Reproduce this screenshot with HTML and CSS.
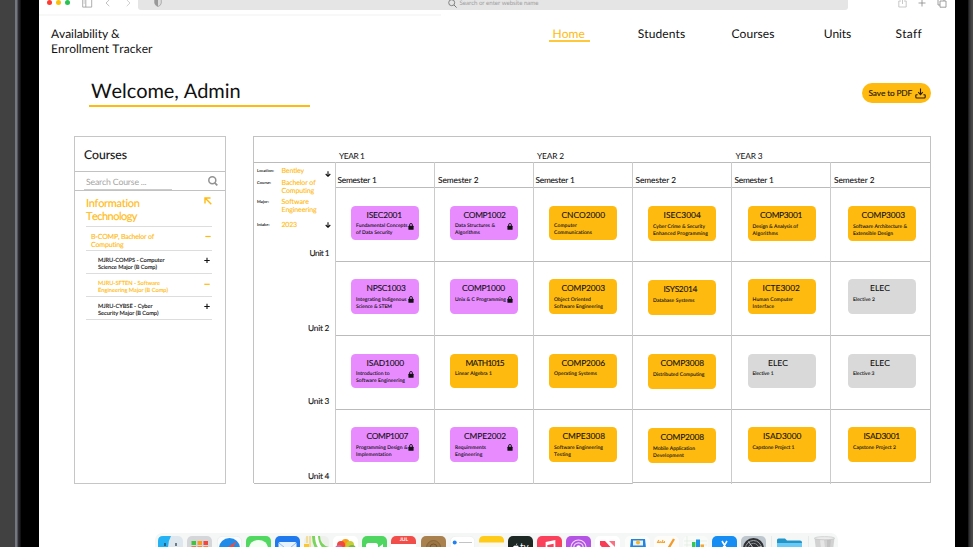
FILE: index.html
```html
<!DOCTYPE html>
<html lang="en">
<head>
<meta charset="utf-8">
<title>Availability &amp; Enrollment Tracker</title>
<link rel="stylesheet" href="styles.css">
</head>
<body>
<div class="bezel-left"></div>
<div class="screen">
  <div class="toolbar">
    <i class="dot red"></i><i class="dot yellow"></i><i class="dot green"></i>
    <svg class="ic-side" width="11" height="10" viewBox="0 0 11 10"><path d="M.7.7h9v8.400h-9zM3.800.7v8.400M1.700 3h1M1.700 5h1" fill="none" stroke="#999" stroke-width=".8"/></svg>
    <svg class="ic-back" width="5" height="8" viewBox="0 0 5 8"><path d="M4.300.8 1 4l3.300 3.200" fill="none" stroke="#bbb" stroke-width=".9"/></svg>
    <svg class="ic-next" width="5" height="8" viewBox="0 0 5 8"><path d="M.7.8 4 4 .7 7.200" fill="none" stroke="#ccc" stroke-width=".9"/></svg>
    <div class="address">
      <svg class="ic-shield" width="8" height="9" viewBox="0 0 8 9"><path d="M4 .5 7.300 1.400V5Q7 7.500 4 8.600 1 7.500.7 5V1.400z" fill="#ddd" stroke="#999" stroke-width=".7"/><path d="M4 .5V8.600Q1 7.500.7 5V1.400z" fill="#999"/></svg>
      <svg class="ic-find" width="9" height="9" viewBox="0 0 9 9"><circle cx="3.700" cy="3.700" r="3" fill="none" stroke="#777" stroke-width=".9"/><path d="m6 6 2.600 2.600" stroke="#777"/></svg>
      <span data-w="79">Search or enter website name</span>
    </div>
    <svg class="ic-share" width="9" height="11" viewBox="0 0 9 11"><path d="M3 4H.8v6h7.400V4H6M4.500 7V.8M2.700 2.400 4.500.7l1.800 1.700" fill="none" stroke="#bbb" stroke-width=".8"/></svg>
    <svg class="ic-plus" width="8" height="8" viewBox="0 0 8 8"><path d="M4 .5v7M.5 4h7" stroke="#888" stroke-width=".8"/></svg>
    <svg class="ic-tabs" width="10" height="10" viewBox="0 0 10 10"><path d="M3 3h6v6.200H3zM3 7H1V.8h6V3" fill="none" stroke="#888" stroke-width=".8"/></svg>
  </div>
  <div class="toolbar-line"></div>

  <header class="header">
    <div class="brand"><span data-w="68.500">Availability &amp;</span><span data-w="101.500">Enrollment Tracker</span></div>
    <nav class="nav">
      <a class="active"><span data-w="32.500">Home</span></a>
      <a class="students"><span data-w="47.500">Students</span></a>
      <a class="courses"><span data-w="43">Courses</span></a>
      <a class="units"><span data-w="27.500">Units</span></a>
      <a class="staff"><span data-w="26.500">Staff</span></a>
    </nav>
  </header>

  <div class="welcome">
    <h1><span data-w="149.500">Welcome, Admin</span></h1>
    <button class="save"><span data-w="43.500">Save to PDF</span>
      <svg width="11" height="11" viewBox="0 0 11 11"><path d="M5.500.6v5.600M3.200 4.200l2.300 2.400 2.300-2.400M2.600 6.800H1.500Q.8 6.800.8 7.500V9q0 1 1 1h7.400q1 0 1-1V7.500q0-.7-.7-.7H8.400" fill="none" stroke="#2a1d00" stroke-width="1.100"/></svg>
    </button>
  </div>

  <main class="main">
    <aside class="sidebar">
      <h2><span data-w="43">Courses</span></h2>
      <div class="search">
        <div class="field"><span data-w="60.500">Search Course ...</span></div>
        <svg width="10" height="10" viewBox="0 0 10 10"><circle cx="4.300" cy="4.300" r="3.500" fill="none" stroke="#929292" stroke-width="1.500"/><path d="m6.800 6.800 2.500 2.500" stroke="#929292" stroke-width="1.700"/></svg>
      </div>
      <div class="tree">
        <div class="node faculty"><div class="label"><span data-w="53.500">Information</span><span data-w="51">Technology</span></div>
          <svg width="8" height="8" viewBox="0 0 8 8"><path d="M7.300 7.300 1.300 1.300M1 6.500V1h5.500" fill="none" stroke="#ffba10" stroke-width="1.400"/></svg></div>
        <div class="node degree"><div class="label"><span data-w="63">B-COMP, Bachelor of</span><span data-w="32.500">Computing</span></div>
          <svg width="6" height="6" viewBox="0 0 6 6"><path d="M.3 2.500h5.400" stroke="#ffba10" stroke-width="1.200"/></svg></div>
        <div class="node major"><div class="label"><span data-w="66.500">MJRU-COMPS - Computer</span><span data-w="59">Science Major (B Comp)</span></div>
          <svg width="6" height="6" viewBox="0 0 6 6"><path d="M.3 3.500h5.400M3 .8v5.200" stroke="#111" stroke-width="1.100"/></svg></div>
        <div class="node major open"><div class="label"><span data-w="62">MJRU-SFTEN - Software</span><span data-w="70">Engineering Major (B Comp)</span></div>
          <svg width="6" height="6" viewBox="0 0 6 6"><path d="M.3 4.300h5.400" stroke="#ffba10" stroke-width="1.200"/></svg></div>
        <div class="node major"><div class="label"><span data-w="54.500">MJRU-CYBSE - Cyber</span><span data-w="60.500">Security Major (B Comp)</span></div>
          <svg width="6" height="6" viewBox="0 0 6 6"><path d="M.3 3.500h5.400M3 .8v5.200" stroke="#111" stroke-width="1.100"/></svg></div>
      </div>
    </aside>

    <section class="planner">
      <div class="years"><span data-w="25.500">YEAR 1</span><span data-w="27">YEAR 2</span><span data-w="27">YEAR 3</span></div>
      <div class="plan">
        <div class="filters">
          <div class="filter location"><div class="key"><span data-w="17">Location:</span></div><div class="value"><span data-w="22.500">Bentley</span></div>
            <svg width="6" height="6" viewBox="0 0 6 6"><path d="M3 .2v5M.7 3 3 5.300 5.300 3" fill="none" stroke="#111" stroke-width="1.100"/></svg></div>
          <div class="filter course"><div class="key"><span data-w="14">Course:</span></div><div class="value"><span data-w="34">Bachelor of</span><span data-w="32.500">Computing</span></div></div>
          <div class="filter field-major"><div class="key"><span data-w="12">Major:</span></div><div class="value"><span data-w="27.500">Software</span><span data-w="35">Engineering</span></div></div>
          <div class="filter intake"><div class="key"><span data-w="12.500">Intake:</span></div><div class="value"><span data-w="15.500">2023</span></div>
            <svg width="6" height="6" viewBox="0 0 6 6"><path d="M3 .2v5M.7 3 3 5.300 5.300 3" fill="none" stroke="#111" stroke-width="1.100"/></svg></div>
          <div class="unit u1"><span data-w="19.500">Unit 1</span></div>
          <div class="unit u2"><span data-w="21">Unit 2</span></div>
          <div class="unit u3"><span data-w="21">Unit 3</span></div>
          <div class="unit u4"><span data-w="21">Unit 4</span></div>
        </div>
        <div class="semesters" id="semesters"></div>
      </div>
    </section>
  </main>

  <div class="dock">
    <svg width="25" height="25" viewBox="0 0 25 25"><rect width="25" height="25" rx="5" fill="#dfe7ee"/><path d="M5 0h8q-3 5-3 13h3v12H5q-5 0-5-5V5q0-5 5-5" fill="#25b2f4"/><path d="M7 7v3M18 7v3" stroke="#234" stroke-width="1.200"/></svg>
    <svg width="25" height="25" viewBox="0 0 25 25"><rect width="25" height="25" rx="5" fill="#d5d6d9"/><path fill="#41c33f" d="M4.500 5H9v4H4.500z"/><path fill="#fb9b19" d="M10.500 5H15v4h-4.500z"/><path fill="#f6453c" d="M16.500 5H21v4h-4.500z"/><path fill="#f6593c" d="M4.500 10.300H9v4H4.500z"/><path fill="#fc6c28" d="M10.500 10.300H15v4h-4.500zM16.500 10.300H21v4h-4.500z"/></svg>
    <svg width="25" height="25" viewBox="0 0 25 25"><rect x=".3" y=".3" width="24.400" height="24.400" rx="5" fill="#fafbfc" stroke="#e6e8ea" stroke-width=".6"/><circle cx="12.500" cy="12.500" r="10.500" fill="#218bea"/><path d="m20 5-6 9-3-3z" fill="#f14b3f"/><path d="m11 11 3 3-9 6z" fill="#fff"/></svg>
    <svg width="25" height="25" viewBox="0 0 25 25"><rect width="25" height="25" rx="5" fill="#51d861"/><ellipse cx="12.500" cy="12" rx="9.500" ry="8" fill="#f2fff2"/></svg>
    <svg width="25" height="25" viewBox="0 0 25 25"><rect width="25" height="25" rx="5" fill="#2079ed"/><rect x="3.500" y="6" width="18" height="13" rx="1.500" fill="#e7f2ff"/><path d="m4 7 8.500 7L21 7" fill="none" stroke="#8fb9e8"/></svg>
    <svg width="25" height="25" viewBox="0 0 25 25"><rect width="25" height="25" rx="5" fill="#eef0ec"/><path d="M8 0h8q0 9 9 11v9q-17-3-17-20" fill="#7bd45b"/><path d="M11 0h3q1 13 11 15v3Q11 15 11 0" fill="#fff"/><path d="M0 8h5v8H0" fill="#fbc62e"/><path d="M3 0v7M6 0v12" stroke="#f4c84d"/></svg>
    <svg width="25" height="25" viewBox="0 0 25 25"><rect width="25" height="25" rx="5" fill="#fff"/><circle cx="12.500" cy="7" r="4" fill="#f99c18"/><circle cx="17" cy="9" r="4" fill="#c9cc32"/><circle cx="8" cy="9" r="4" fill="#ef4a3d"/><circle cx="19" cy="13" r="4" fill="#72b94a"/><circle cx="6" cy="13" r="4" fill="#d569a6"/></svg>
    <svg width="25" height="25" viewBox="0 0 25 25"><rect width="25" height="25" rx="5" fill="#4fd660"/><rect x="4" y="7" width="12" height="11" rx="2.500" fill="#fff"/><path d="m17 11 4-3v9l-4-3z" fill="#fff"/></svg>
    <div class="calendar"><b>JUL</b><em>17</em></div>
    <svg width="25" height="25" viewBox="0 0 25 25"><rect width="25" height="25" rx="5" fill="#a8814f"/><circle cx="12.500" cy="11.500" r="7" fill="#9b7546" stroke="#80602f" stroke-width=".8"/><circle cx="12.500" cy="11.500" r="3.500" fill="none" stroke="#76572b"/></svg>
    <svg width="25" height="25" viewBox="0 0 25 25"><rect x=".3" y=".3" width="24.400" height="24.400" rx="5" fill="#fff" stroke="#eaeaea" stroke-width=".6"/><circle cx="4.700" cy="6.500" r="2" fill="#2281f2"/><path d="M9 6.500h13" stroke="#b4b4b8" stroke-width=".8"/></svg>
    <svg width="25" height="25" viewBox="0 0 25 25"><rect width="25" height="25" rx="5" fill="#fbf9ee"/><path d="M0 6.500V5q0-5 5-5h15q5 0 5 5v1.500" fill="#fecb1a"/></svg>
    <div class="tv"><svg width="8" height="8" viewBox="0 0 8 8"><path d="M4 2.300Q4 .8 5.200.3 5.300 1.700 4 2.300M1 4.500q0-2 2-2l1 .3 1-.3q1.500 0 1.800.8-1.600 1.200.2 2.700Q6.200 8 5.200 7.700L4 7.400l-1.200.3Q1 7.500 1 4.500" fill="#fff"/></svg><span>tv</span></div>
    <svg width="25" height="25" viewBox="0 0 25 25"><rect width="25" height="25" rx="5" fill="#fa405b"/><path d="M9.500 17V6.800l8-1.800v11M9.500 8.500l8-1.800" fill="none" stroke="#fff" stroke-width="1.700"/></svg>
    <svg width="25" height="25" viewBox="0 0 25 25"><rect width="25" height="25" rx="5" fill="#b354e4"/><g fill="none" stroke="#f2dcff" stroke-width="1.200"><circle cx="12.500" cy="11.500" r="7.500"/><circle cx="12.500" cy="11.500" r="4.700"/></g><circle cx="12.500" cy="11.500" r="2.200" fill="#fff"/></svg>
    <svg width="25" height="25" viewBox="0 0 25 25"><rect width="25" height="25" rx="5" fill="#fff"/><path d="M5 5h5l10 11v4h-5L5 9z" fill="#fa3c57"/><path d="M14 5h6v6z" fill="#fb7080"/></svg>
    <svg width="25" height="25" viewBox="0 0 25 25"><rect width="25" height="25" rx="5" fill="#fcfcfb"/><path d="M6 3h14l1 9H5z" fill="#2384df"/><path d="M8 4.500h10v5H8z" fill="#e7f2fb"/><circle cx="13" cy="6.500" r="2" fill="#f6b62c"/></svg>
    <svg width="25" height="25" viewBox="0 0 25 25"><rect width="25" height="25" rx="5" fill="#fdfcf8"/><path d="M4.800 4 3.600 6.500h2.600V5M9 4 7.800 6.500h2.600V5" stroke="#f5a633" stroke-width="1.200" fill="none"/><path d="m20 3-9 15" stroke="#f29b2d" stroke-width="2.300"/></svg>
    <svg width="25" height="25" viewBox="0 0 25 25"><rect width="25" height="25" rx="5" fill="#f9fbf8"/><path d="M4 0v25M1 5h23M1 9h23" stroke="#dce9df" stroke-width=".6"/><path d="M9 6h3.500v15H9z" fill="#33c659"/><path d="M13 3.500h4V21h-4z" fill="#1f93e8"/><path d="M17.500 8.500H21V21h-3.500z" fill="#f8a62b"/></svg>
    <svg width="25" height="25" viewBox="0 0 25 25"><rect width="25" height="25" rx="5" fill="#168df2"/><path d="m10 5 7 12M15 5 8 17M5 14h15" stroke="#fff" stroke-width="1.600"/></svg>
    <svg width="25" height="25" viewBox="0 0 25 25"><rect width="25" height="25" rx="5" fill="#bfc7ce"/><circle cx="12.500" cy="12.500" r="10.500" fill="#303236"/><circle cx="12.500" cy="12.500" r="8" fill="none" stroke="#a0a5a9"/><circle cx="12.500" cy="12.500" r="5.200" fill="none" stroke="#878d92"/><path d="m12.500 12.500-5-7M12.500 12.500l8-2" stroke="#c9cdd1"/></svg>
    <i class="rule"></i>
    <svg width="25" height="25" viewBox="0 0 25 25"><path d="M0 4q0-1.500 1.500-1.500H8l2 2h13q2 0 2 2V22H0z" fill="#2396c9"/><path d="M0 7h25v15H0z" fill="#6bcaf5"/></svg>
    <i class="rule"></i>
    <svg width="21" height="25" viewBox="0 0 21 25"><path d="M.5 2h20l-2.500 20H3z" fill="#d2d2d2"/><path d="M6 4h4l1 8H7z" fill="#e6e6e6"/><path d="M13 4h4l-1 8h-3z" fill="#c3c3c3"/><ellipse cx="10.500" cy="2.200" rx="10" ry="1.600" fill="#ececec" stroke="#c1c1c1" stroke-width=".6"/></svg>
  </div>
</div>
<div class="bezel-right"></div>
<script src="planner.js"></script>
</body>
</html>
```

FILE: styles.css
```css
* { box-sizing: border-box; }
body {
  margin: 0; width: 973px; height: 547px; overflow: hidden; display: flex;
  background: #000; color: #111; font-family: Lato, "Open Sans", sans-serif;
  text-rendering: geometricPrecision;
}
svg { display: block; flex: none; }
h1, h2 { margin: 0; font-weight: 400; }
[data-w] { display: block; width: max-content; white-space: pre; font-kerning: none; font-variant-ligatures: none; }

.bezel-left { width: 39px; flex: none; background: linear-gradient(90deg, #414141 14.500px, #74777f 15.500px 17px, #303136 18px, #1c1c1e 20px, #000 21.500px); }
.bezel-right { width: 18px; flex: none; background: linear-gradient(90deg, #000 12.500px, #2c2c2e 14px, #4a4a4d 17px); }
.screen { width: 916px; height: 547px; flex: none; background: #fff; display: flex; flex-direction: column; overflow: hidden; }

.toolbar { height: 14px; flex: none; display: flex; align-items: center; padding: 0 8px 9px; overflow: hidden; }
.toolbar > * { flex: none; }
.dot { width: 5px; height: 5px; border-radius: 50%; margin-right: 4px; }
.red { background: #ff3b30; }
.yellow { background: #fbc108; }
.green { background: #28c250; }
.ic-side { margin-left: 8px; }
.ic-back { margin-left: 11.500px; }
.ic-next { margin-left: 16px; }
.address { width: 710px; height: 15px; margin-left: 7px; border-radius: 0 0 3px 3px; background: #e5e5e5; display: flex; align-items: center; color: #a0a0a0; font-size: 6.200px; }
.address span { padding-top: 1px; }
.ic-shield { margin-left: 16.500px; }
.ic-find { margin: 1px 2.500px 0 286px; }
.ic-share { margin-left: 50px; }
.ic-plus { margin-left: 11.500px; }
.ic-tabs { margin-left: 11px; }
.toolbar-line { width: 402px; height: 2px; flex: none; background: #f8f8f8; }

.header { height: 57px; flex: none; display: flex; padding: 9.800px 0 0 12px; font-size: 12px; line-height: 15.300px; }
.brand { width: 498px; }
.nav { display: flex; }
.nav a { height: 16.200px; }
.nav .active { width: 40.500px; padding-left: 3.500px; color: #ffba10; border-bottom: 2px solid #ffc83c; }
.students { margin-left: 48.200px; }
.courses { margin-left: 46.300px; }
.units { margin-left: 49.200px; }
.staff { margin-left: 44.300px; }

.welcome { height: 63px; flex: none; display: flex; justify-content: space-between; padding: 5px 24px 0 49.500px; }
.welcome h1 { width: 221.500px; height: 29px; padding: .5px 0 0 2.500px; font-size: 20px; line-height: 24px; border-bottom: 2px solid #ffba10; }
.save { width: 69px; height: 20px; margin-top: 5px; padding: 0 0 0 6.500px; border: 0; border-radius: 10px; background: #ffba10; display: flex; align-items: center; gap: 2.700px; font: 8.300px/10px Lato, sans-serif; color: #1d1400; -webkit-text-stroke: .12px; }

.main { flex: none; height: 349px; display: flex; gap: 27px; padding-left: 35px; }
.sidebar { width: 152px; height: 348px; border: 1px solid #c6c6c6; }
.sidebar h2 { height: 35px; padding: 10.300px 0 0 9px; font-size: 12.200px; line-height: 16px; border-bottom: 1px solid #c2c2c2; -webkit-text-stroke: .12px; }
.search { height: 19px; display: flex; justify-content: space-between; padding: 0 7.500px 0 9px; border-bottom: 1px solid #c2c2c2; align-items: center; }
.field { width: 88px; height: 17px; padding: 3.200px 0 0 2px; border-bottom: 1px solid #ccc; font-size: 8.700px; line-height: 11px; color: #a5a5a5; }
.tree { padding: 0 13px 0 11px; }
.node { display: flex; justify-content: space-between; border-bottom: 1px solid #ddd; -webkit-text-stroke: .12px; }
.faculty { height: 36px; padding-top: 6.400px; font-size: 11px; line-height: 13px; color: #ffba10; }
.degree { height: 24px; padding: 7.300px 1.500px 0 5px; font-size: 7px; line-height: 7.800px; color: #ffba10; }
.major { height: 23px; padding: 6.300px 2px 0 12px; font-size: 5.700px; line-height: 7px; }
.open { color: #ffba10; }

.planner { width: 678px; border: 1px solid #c2c2c2; border-bottom: 0; height: 347px; }
.years { height: 25px; padding: 13.700px 0 0 85px; display: flex; font-size: 8.400px; line-height: 11px; }
.years span + span { margin-left: 172.500px; }
.years span:last-child { margin-left: 171.500px; }
.plan { display: flex; }
.filters { width: 81px; height: 322px; flex: none; border-top: 1px solid #bbb; border-bottom: 1px solid #bbb; padding-left: 3px; font-size: 7px; line-height: 8px; -webkit-text-stroke: .1px; }
.filter { display: flex; }
.key { width: 24.500px; font-size: 4px; line-height: 7.800px; }
.value { width: 43.500px; color: #ffba10; }
.location { height: 12.300px; padding-top: 3.600px; }
.location svg { margin-top: 4.200px; }
.course { height: 19px; padding-top: 3.600px; }
.field-major { height: 19px; padding-top: 3.800px; }
.intake { height: 16px; padding-top: 7.700px; }
.intake svg { margin-top: .7px; }
.unit { display: flex; justify-content: flex-end; padding-right: 6px; height: 10px; font-size: 8.300px; line-height: 10px; }
.u1 { margin-top: 19.200px; }
.u2 { margin-top: 64.500px; }
.u3 { margin-top: 63px; }
.u4 { margin-top: 65px; }

.semesters { display: flex; }
.semester { width: 99px; border-left: 1px solid #cbcbcb; }
.semester:last-child { width: 100px; }
.semester h3 { margin: 0; height: 25px; border-top: 1px solid #bbb; padding: 11.700px 0 0 var(--x); font-weight: 400; font-size: 8.300px; line-height: 10px; -webkit-text-stroke: .1px; }
.cell { height: 74px; border-top: 1px solid #bbb; padding: var(--y) 0 0 var(--x); }
.cell:last-child { height: 75px; border-bottom: 1px solid #bbb; }
.short .cell:last-child { height: 74px; }
.card { width: 68px; height: 34.500px; border-radius: 4.500px; padding-top: 4px; background: #ffba10; font-size: 5px; line-height: 6.700px; -webkit-text-stroke: .1px; }
.card.locked { background: #e78bff; }
.card.elective { background: #d9d9d9; }
.card h4 { margin: 0; height: 11.500px; padding-left: var(--t); font-weight: 400; font-size: 8.400px; line-height: 11px; }
.about { display: flex; justify-content: space-between; padding: 2.300px 4.600px 0 5px; }
.about svg { margin-top: -.8px; }

.dock { width: 683px; height: 14px; margin: auto 0 0 116px; flex: none; display: flex; gap: 4.150px; padding: 3px 0 0 3.300px; background: #f5f7f7; border-radius: 7px 7px 0 0; overflow: hidden; }
.calendar, .tv { width: 25px; height: 25px; flex: none; border-radius: 5px; overflow: hidden; text-align: center; }
.calendar { background: #fff; font-size: 14px; line-height: 15px; }
.calendar b { display: block; height: 7.500px; background: #f24e49; color: #fff; font-size: 5px; line-height: 8px; }
.calendar em { display: block; font-style: normal; }
.tv { background: #1d2724; color: #fff; display: flex; padding: 7px 0 0 4px; font-size: 10px; line-height: 9px; }
.rule { width: 1px; height: 14px; background: #e8eaea; flex: none; margin: 0 1px; }
```

FILE: planner.js
```js
// Columns: heading, heading width, heading inset, card inset, units.
// Units: code, code inset, code width, top inset, kind, description lines with widths.
const L = 'locked', E = 'elective', O = '';
const plan = [
  ['Semester 1', 39, 1.5, 15, [
    ['ISEC2001', 15.5, 35.5, 17.5, L, ['Fundamental Concepts', 51.5], ['of Data Security', 36.5]],
    ['NPSC1003', 15.5, 39, 17, L, ['Integrating Indigenous', 50.5], ['Science & STEM', 36]],
    ['ISAD1000', 15.5, 37.5, 17.5, L, ['Introduction to', 33.5], ['Software Engineering', 49]],
    ['COMP1007', 15.5, 41.5, 17, L, ['Programming Design &', 51.5], ['Implementation', 35.5]]]],
  ['Semester 2', 40.5, 3, 15, [
    ['COMP1002', 13.5, 42, 17.5, L, ['Data Structures &', 40], ['Algorithms', 25]],
    ['COMP1000', 12, 43, 17, L, ['Unix & C Programming', 51]],
    ['MATH1015', 15.5, 38.5, 17.5, O, ['Linear Algebra 1', 37]],
    ['CMPE2002', 14, 42, 17, L, ['Requirements', 31], ['Engineering', 27.5]]]],
  ['Semester 1', 39, 1.5, 15, [
    ['CNCO2000', 12.5, 43.5, 17.5, O, ['Computer', 23], ['Communications', 38]],
    ['COMP2003', 12.5, 43.5, 17, O, ['Object Oriented', 37], ['Software Engineering', 49]],
    ['COMP2006', 12.5, 43.5, 17.5, O, ['Operating Systems', 43]],
    ['CMPE3008', 13.5, 42.5, 17, O, ['Software Engineering', 49], ['Testing', 17]]]],
  ['Semester 2', 40.5, 2.5, 15, [
    ['ISEC3004', 15.5, 37.5, 18, O, ['Cyber Crime & Security', 52], ['Enhanced Programming', 55]],
    ['ISYS2014', 15.5, 33.5, 18, O, ['Database Systems', 41.5]],
    ['COMP3008', 12.5, 43.5, 18.3, O, ['Distributed Computing', 51.5]],
    ['COMP2008', 12.5, 43.5, 18, O, ['Mobile Application', 42], ['Development', 31]]]],
  ['Semester 1', 39, 2.5, 15.5, [
    ['COMP3001', 12.5, 42, 18, O, ['Design & Analysis of', 45.5], ['Algorithms', 25.5]],
    ['ICTE3002', 15, 37.5, 17, O, ['Human Computer', 40.5], ['Interface', 22]],
    ['ELEC', 20.5, 20, 17.5, E, ['Elective 1', 21]],
    ['ISAD3000', 15.5, 38.5, 17, O, ['Capstone Project 1', 42]]]],
  ['Semester 2', 40.5, 3, 17, [
    ['COMP3003', 13.5, 43.5, 18, O, ['Software Architecture &', 54], ['Extensible Design', 40]],
    ['ELEC', 22, 20, 17, E, ['Elective 2', 22]],
    ['ELEC', 22, 20, 17.5, E, ['Elective 3', 21.5]],
    ['ISAD3001', 15.5, 36.5, 17, O, ['Capstone Project 2', 43]]]]
];
const lock = '<svg width="6" height="7" viewBox="0 0 6 7"><rect x=".4" y="2.700" width="5.200" height="4.100" rx=".6" fill="#111"/><path d="M1.600 3V1.900a1.400 1.400 0 0 1 2.800 0V3" fill="none" stroke="#111" stroke-width=".9"/></svg>';
const text = (t, w) => `<span data-w="${w}">${t.replace('&', '&amp;')}</span>`;

document.getElementById('semesters').innerHTML = plan.map(([name, w, inset, x, units], i) =>
  `<div class="semester${i > 2 ? ' short' : ''}"><h3 style="--x:${inset}px">${text(name, w)}</h3>` +
  units.map(([code, t, cw, y, kind, ...lines]) =>
    `<div class="cell" style="--x:${x}px;--y:${y}px"><div class="card ${kind}"><h4 style="--t:${t}px">${text(code, cw)}</h4>` +
    `<div class="about"><div>${lines.map(l => text(...l)).join('')}</div>${kind === L ? lock : ''}</div></div></div>`).join('') +
  '</div>').join('');

// Track each label so that it fills its designed width.
document.querySelectorAll('[data-w]').forEach(el => {
  const natural = el.getBoundingClientRect().width;
  el.style.letterSpacing = (el.dataset.w - natural) / el.textContent.length + 'px';
});
```
